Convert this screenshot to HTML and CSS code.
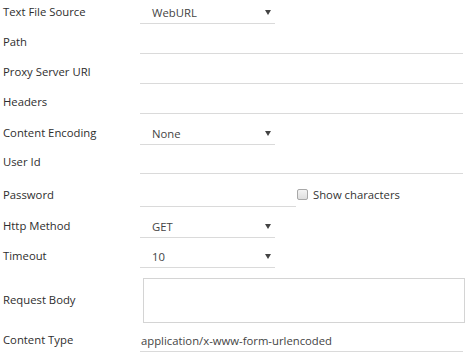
FILE: index.html
```html
<!DOCTYPE html>
<html>
<head>
<meta charset="utf-8">
<link rel="stylesheet" href="styles.css">
</head>
<body>
<form class="form">
  <div class="row r1">
    <label class="label">Text File Source</label>
    <div class="field select"><span class="val">WebURL</span><span class="arrow"></span></div>
  </div>
  <div class="row r30">
    <label class="label">Path</label>
    <div class="field text"></div>
  </div>
  <div class="row r30">
    <label class="label">Proxy Server URI</label>
    <div class="field text"></div>
  </div>
  <div class="row r30">
    <label class="label">Headers</label>
    <div class="field text"></div>
  </div>
  <div class="row r31">
    <label class="label">Content Encoding</label>
    <div class="field select"><span class="val">None</span><span class="arrow"></span></div>
  </div>
  <div class="row r29">
    <label class="label">User Id</label>
    <div class="field text"></div>
  </div>
  <div class="row r33">
    <label class="label">Password</label>
    <div class="pw">
      <div class="field password"></div>
      <span class="check"><span class="box"></span>Show characters</span>
    </div>
  </div>
  <div class="row r31">
    <label class="label">Http Method</label>
    <div class="field select"><span class="val">GET</span><span class="arrow"></span></div>
  </div>
  <div class="row r30">
    <label class="label">Timeout</label>
    <div class="field select"><span class="val">10</span><span class="arrow"></span></div>
  </div>
  <div class="row rta">
    <label class="label">Request Body</label>
    <div class="textarea"></div>
  </div>
  <div class="row r29">
    <label class="label">Content Type</label>
    <div class="field text"><span class="plain">application/x-www-form-urlencoded</span></div>
  </div>
</form>
</body>
</html>
```

FILE: styles.css
```css
html, body {
  margin: 0;
  padding: 0;
  background: #ffffff;
}
body {
  font-family: "Open Sans", "Noto Sans", sans-serif;
  font-size: 11.3px;
  color: #333333;
}
.form {
  display: flex;
  flex-direction: column;
  width: 471px;
}
.row {
  display: grid;
  grid-template-columns: 140px 1fr;
  align-items: end;
  box-sizing: border-box;
}
.r1 { height: 24px; }
.r29 { height: 29px; }
.r30 { height: 30px; }
.r31 { height: 31px; }
.r33 { height: 33px; }
.label {
  padding-left: 3px;
  line-height: 20px;
  padding-bottom: 2px;
  color: #2e2e2e;
  white-space: nowrap;
}
.field {
  height: 23px;
  border-bottom: 1px solid #dadada;
  box-sizing: border-box;
  display: flex;
  align-items: center;
  color: #444444;
  padding-top: 1px;
}
.select {
  width: 135px;
  padding-left: 12px;
  padding-right: 4px;
  justify-content: space-between;
}
.arrow {
  width: 0;
  height: 0;
  border-left: 3px solid transparent;
  border-right: 3px solid transparent;
  border-top: 5px solid #444444;
}
.text {
  width: 323px;
}
.plain {
  padding-left: 1px;
}
.pw {
  display: flex;
  align-items: flex-end;
}
.password {
  width: 156px;
}
.check {
  display: flex;
  align-items: center;
  gap: 5px;
  height: 20px;
  margin-bottom: 3px;
  margin-left: 1px;
  color: #333333;
}
.box {
  width: 9px;
  height: 9px;
  border: 1px solid #a8a8a8;
  border-radius: 2px;
  background: linear-gradient(#f4f4f4, #dedede);
}
.rta {
  height: 55px;
  align-items: center;
  padding-top: 9px;
}
.rta .label {
  padding-bottom: 0;
}
.textarea {
  margin-left: 3px;
  width: 322px;
  height: 45px;
  box-sizing: border-box;
  border: 1px solid #d4d4d4;
}
```
